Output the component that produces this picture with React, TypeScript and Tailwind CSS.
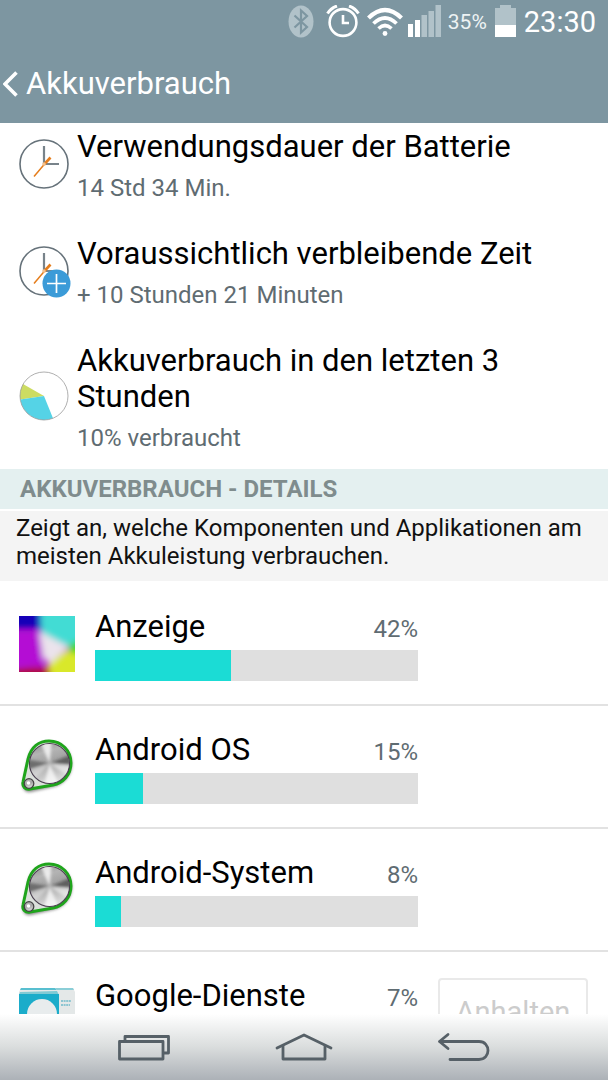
import type { ReactNode } from 'react';

function StatusBar() {
  return (
    <div className="flex h-11 items-center justify-end pr-3 pl-4" aria-label="Status">
      <svg className="mr-3 h-[34px] w-[26px]" viewBox="0 0 26 34" aria-hidden="true">
        <ellipse cx="13" cy="16.500" rx="12.500" ry="16" fill="#b1c2c9" />
        <path d="M6.500 10.500L19 22L13 27.500V5.500L19 11L6.500 22.500" fill="none" stroke="#7d96a1" strokeWidth="2.200" />
      </svg>
      <svg className="mr-[7px] h-[34px] w-[34px]" viewBox="0 0 34 34" fill="none" stroke="#fff" aria-hidden="true">
        <circle cx="17" cy="17.500" r="13.400" strokeWidth="2.600" />
        <path d="M17 10V18H23" strokeWidth="2.600" />
        <path d="M1.500 8.500Q5 3 11 1M23 1Q29 3 32.500 8.500" strokeWidth="3" />
      </svg>
      <svg className="mr-[5px] h-[30px] w-9" viewBox="0 0 36 30" fill="none" stroke="#fff" aria-hidden="true">
        <path d="M1.500 11Q18 -5 34.500 11" strokeWidth="4.200" />
        <path d="M6.500 16.500Q18 5.500 29.500 16.500" strokeWidth="3.800" />
        <path d="M11.500 21.500Q18 15.500 24.500 21.500" strokeWidth="3.600" />
        <circle cx="18" cy="26.500" r="2.400" fill="#fff" stroke="none" />
      </svg>
      <svg className="mr-1.5 h-[34px] w-[34px]" viewBox="0 0 34 34" aria-hidden="true">
        <path d="M0 19h5v13h-5z M7 15h5v17h-5z" fill="#fff" />
        <path d="M13.500 10h5.500v22h-5.500z M20.500 6h5.500v26h-5.500z M27.500 0h5.500v32h-5.500z" fill="#b1c2c9" />
      </svg>
      <span className="mr-2 text-[21px] leading-8 text-[#eef3f4]">35%</span>
      <svg className="mr-2 h-[34px] w-[21px]" viewBox="0 0 21 34" aria-hidden="true">
        <path d="M5 0h11v3h5v18H0V3h5z" fill="#b1c2c9" />
        <path d="M0 20h21v12H0z" fill="#fff" />
      </svg>
      <span className="text-[29px] leading-8 text-white">23:30</span>
    </div>
  );
}

function ClockIcon({ plus = false }: { plus?: boolean }) {
  return (
    <svg className="size-[50px] shrink-0 overflow-visible" viewBox="0 0 50 50" fill="none" aria-hidden="true">
      <circle cx="25" cy="25" r="24" stroke="#66727a" strokeWidth="1.600" />
      <path d="M25 7V25H40" stroke="#78838a" strokeWidth="2.200" />
      <path d="M15 37.500L26 24.500" stroke="#e57d1c" strokeWidth="1.500" />
      <path d="M25 25.500L31.500 18.500" stroke="#e57d1c" strokeWidth="2.600" />
      <circle cx="25" cy="25" r="1.800" fill="#f3c08c" />
      {plus && (
        <>
          <circle cx="37.500" cy="37.500" r="14" fill="#3b9bd8" />
          <path d="M28 37.500H47M37.500 28V47" stroke="#fff" strokeWidth="1.700" />
        </>
      )}
    </svg>
  );
}

function PieIcon() {
  return (
    <svg className="size-[50px] shrink-0" viewBox="0 0 50 50" aria-hidden="true">
      <circle cx="25" cy="25" r="24" fill="#fff" />
      <path d="M25 25L4 13A24 24 0 0 0 1.300 28.500Z" fill="#cddc62" />
      <path d="M25 25L1.300 28.500A24 24 0 0 0 34 47.300Z" fill="#55d3e6" />
      <circle cx="25" cy="25" r="24" fill="none" stroke="#9a9a9a" strokeWidth="0.800" />
    </svg>
  );
}

function DisplayIcon() {
  return (
    <svg className="size-14" viewBox="0 0 56 56" aria-hidden="true">
      <defs>
        <filter id="soft" x="-30%" y="-30%" width="160%" height="160%">
          <feGaussianBlur stdDeviation="3.200" />
        </filter>
        <clipPath id="tile">
          <path d="M0 0h56v56H0z" />
        </clipPath>
      </defs>
      <g clipPath="url(#tile)">
        <path d="M0 0h56v56H0z" fill="#b010d0" />
        <g filter="url(#soft)">
          <path d="M-10 -10H24V13H-10z" fill="#1800b8" />
          <path d="M-10 15H21L24 50H-10z" fill="#b410d4" />
          <path d="M-10 54L15 51L33 52V66H-10z" fill="#b00838" />
          <path d="M21 -10H66V28L50 31L22 17z" fill="#42dcd4" />
          <path d="M66 20L49 30L52 40L66 44z" fill="#42d820" />
          <path d="M48 34L66 42V66H34L28 49z" fill="#d9e82a" />
          <path d="M20 15L50 31L31 48L24 42z" fill="#ebe3ec" />
        </g>
      </g>
    </svg>
  );
}

function AndroidIcon({ id }: { id: string }) {
  const metal = `metal-${id}`;
  const shade = `shade-${id}`;
  const disc = `disc-${id}`;
  return (
    <svg className="size-14" viewBox="0 0 56 56" aria-hidden="true">
      <defs>
        <linearGradient id={metal} x1="0" y1="0" x2="0.300" y2="1">
          <stop offset="0" stopColor="#8c8c8c" />
          <stop offset="0.300" stopColor="#b4b4b4" />
          <stop offset="0.550" stopColor="#a2a2a2" />
          <stop offset="1" stopColor="#d8d8d8" />
        </linearGradient>
        <filter id={shade} x="-30%" y="-30%" width="160%" height="160%">
          <feGaussianBlur stdDeviation="1.600" />
        </filter>
        <clipPath id={disc}>
          <circle cx="30.500" cy="24.500" r="19.500" />
        </clipPath>
      </defs>
      <path d="M9 20C12 8 20 3 30 3C43 3 53 12 53 25C53 37 44 46 34 48L12 53C6 54 3 50 4 44Z" fill="#8a8a8a" filter={`url(#${shade})`} />
      <path d="M9 20C12 8 20 2 30 2C43 2 52 12 52 24C52 36 44 44 34 46L11 50C6 51 3 47 4 43Z" fill="#dbe0db" stroke="#1fa51c" strokeWidth="3" />
      <path d="M48.500 14Q53 24 49 34L44 30V18z" fill="#284128" opacity="0.700" />
      <circle cx="30.500" cy="24.500" r="20" fill={`url(#${metal})`} stroke="#4b4050" strokeWidth="1.200" />
      <g clipPath={`url(#${disc})`}>
        <g filter={`url(#${shade})`}>
          <path d="M30.500 24.500L6 20V31z" fill="#555" opacity="0.700" />
          <path d="M30.500 24.500L54 15V26z" fill="#444" opacity="0.750" />
          <path d="M30.500 24.500L20 0H33z" fill="#fff" opacity="0.750" />
          <path d="M30.500 24.500L24 50H42z" fill="#fff" opacity="0.700" />
          <path d="M30.500 24.500L54 27V40z" fill="#fff" opacity="0.500" />
          <path d="M30.500 24.500L6 33L14 42z" fill="#fff" opacity="0.350" />
        </g>
      </g>
      <circle cx="10" cy="44.500" r="4.800" fill={`url(#${metal})`} stroke="#444" strokeWidth="1.300" />
      <circle cx="9.500" cy="44" r="1.800" fill="#fff" />
    </svg>
  );
}

function ServicesIcon() {
  return (
    <svg className="size-14" viewBox="0 0 56 56" aria-hidden="true">
      <path d="M2 3H54L56 7V50H38L0 52V7z" fill="#e4e8e8" />
      <path d="M2 3H36L38 5H1z" fill="#58bfd0" />
      <path d="M36 3H54L55 5H38z" fill="#8bced7" />
      <path d="M1 7L38 6L40 10H0z" fill="#80cad4" />
      <path d="M0 9H40V52H0z" fill="#1bacca" />
      <circle cx="23" cy="29" r="15" fill="#e8eced" />
      <path d="M42 16h10M42 20h9" stroke="#6fb9c9" strokeWidth="1.500" strokeDasharray="2 0.600" />
    </svg>
  );
}

type Summary = { icon: ReactNode; title: string; value: string };

const summaries: Summary[] = [
  { icon: <ClockIcon />, title: 'Verwendungsdauer der Batterie', value: '14 Std 34 Min.' },
  { icon: <ClockIcon plus />, title: 'Voraussichtlich verbleibende Zeit', value: '+ 10 Stunden 21 Minuten' },
  { icon: <PieIcon />, title: 'Akkuverbrauch in den letzten 3 Stunden', value: '10% verbraucht' },
];

type Usage = { icon: ReactNode; name: string; percent: number; stoppable?: boolean };

const usages: Usage[] = [
  { icon: <DisplayIcon />, name: 'Anzeige', percent: 42 },
  { icon: <AndroidIcon id="os" />, name: 'Android OS', percent: 15 },
  { icon: <AndroidIcon id="system" />, name: 'Android-System', percent: 8 },
  { icon: <ServicesIcon />, name: 'Google-Dienste', percent: 7, stoppable: true },
];

function UsageRow({ icon, name, percent, stoppable }: Usage) {
  return (
    <li className="flex h-[123px] items-center gap-5 border-b-2 border-[#e2e2e2] pr-5 pl-[19px]">
      <div className="shrink-0">{icon}</div>
      <div className="min-w-0 flex-1">
        <div className="flex h-10 items-center justify-between">
          <span className="pt-0.5 text-[31px] leading-9 text-black">{name}</span>
          <span className="pt-1.5 text-[24px] leading-8 text-[#5f6c72]">{percent}%</span>
        </div>
        <div className="mt-1 h-[31px] bg-[#dfdfdf]">
          <div className="h-full bg-[#1bdcd5]" style={{ width: `${percent}%` }} />
        </div>
      </div>
      <div className="flex w-[150px] shrink-0 self-stretch py-[26px]">
        {stoppable && (
          <button
            type="button"
            className="w-full rounded border-2 border-[#e9e9e9] bg-white text-[29px] text-[#cccccc]"
          >
            Anhalten
          </button>
        )}
      </div>
    </li>
  );
}

function NavBar() {
  return (
    <nav className="flex h-[66px] shrink-0 items-center justify-center gap-[104px] bg-linear-to-b from-white via-[#dadddd] to-[#acb1b7]">
      <button type="button" aria-label="Letzte Apps">
        <svg className="h-[30px] w-[54px]" viewBox="0 0 54 30" fill="none" stroke="#566067" strokeWidth="2.800" strokeLinejoin="round" aria-hidden="true">
          <path d="M2.500 9.500H46V27H2.500z" />
          <path d="M8 9.500V4.500H51.500V21H46" />
        </svg>
      </button>
      <button type="button" aria-label="Startseite">
        <svg className="h-[30px] w-[58px]" viewBox="0 0 58 30" fill="none" stroke="#566067" strokeWidth="2.800" strokeLinejoin="round" strokeLinecap="round" aria-hidden="true">
          <path d="M2 16L29 3L56 16" />
          <path d="M8 14V27H50V14" />
        </svg>
      </button>
      <button type="button" aria-label="Zurück">
        <svg className="h-[30px] w-[54px]" viewBox="0 0 54 30" fill="none" stroke="#566067" strokeWidth="2.800" strokeLinejoin="round" strokeLinecap="round" aria-hidden="true">
          <path d="M11 2.500L2.500 9.500L11 16.500" />
          <path d="M3 9.500H42C54 9.500 54 27.500 42 27.500H13" />
        </svg>
      </button>
    </nav>
  );
}

export default function App() {
  return (
    <div className="flex h-screen flex-col overflow-hidden bg-white font-[Roboto,sans-serif]">
      <header className="h-[123px] shrink-0 bg-[#7d96a1]">
        <StatusBar />
        <button type="button" className="flex h-[79px] items-center gap-2 pl-[3px] text-left">
          <svg className="h-[26px] w-[15px]" viewBox="0 0 15 26" fill="none" stroke="#fff" strokeWidth="3.600" aria-hidden="true">
            <path d="M13.500 1.500L2 13L13.500 24.500" />
          </svg>
          <h1 className="text-[31px] leading-10 text-white">Akkuverbrauch</h1>
        </button>
      </header>
      <main className="min-h-0 flex-1 overflow-y-auto [scrollbar-width:none]">
        <ul className="flex flex-col gap-[37px] pt-1.5 pr-5 pb-5 pl-[19px]">
          {summaries.map((item) => (
            <li key={item.title} className="flex items-center gap-2">
              {item.icon}
              <div>
                <h2 className="text-[31px] leading-9 text-black">{item.title}</h2>
                <p className="mt-3 text-[24px] leading-[22px] text-[#5f6c72]">{item.value}</p>
              </div>
            </li>
          ))}
        </ul>
        <h2 className="mb-0.5 bg-[#e4f0f0] px-5 text-[24px] leading-10 font-bold text-[#7f8c8d]">
          AKKUVERBRAUCH - DETAILS
        </h2>
        <p className="bg-[#f4f4f4] px-4 pt-[3px] pb-[11px] text-[24px] leading-7 text-[#111111]">
          Zeigt an, welche Komponenten und Applikationen am meisten Akkuleistung verbrauchen.
        </p>
        <ul className="pt-0.5">
          {usages.map((item) => (
            <UsageRow key={item.name} {...item} />
          ))}
        </ul>
      </main>
      <NavBar />
    </div>
  );
}
